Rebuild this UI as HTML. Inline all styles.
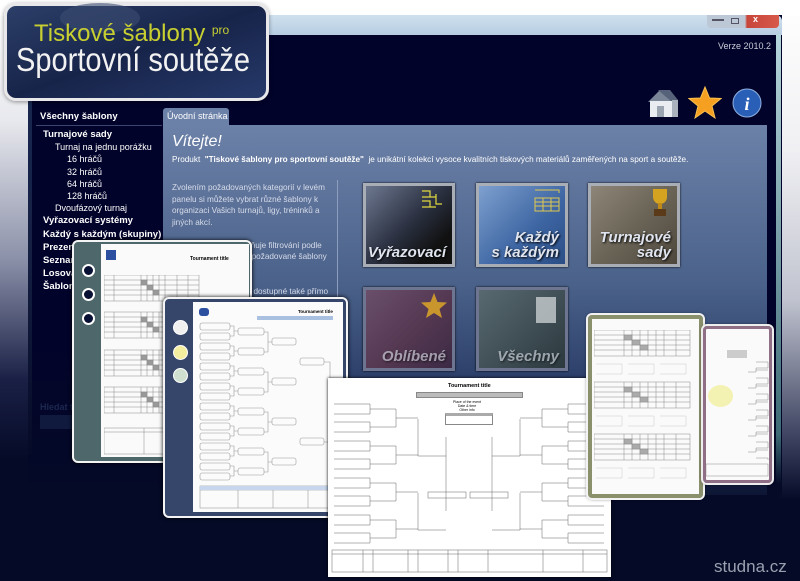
<!DOCTYPE html>
<html><head><meta charset="utf-8"><style>
*{margin:0;padding:0;box-sizing:border-box}
body{width:800px;height:581px;overflow:hidden;position:relative;background:#050a27;font-family:"Liberation Sans","DejaVu Sans",sans-serif}
.abs{position:absolute}
.lstrip{left:0;top:0;width:30px;height:581px;background:linear-gradient(#fff 0,#e8e9ee 120px,#8a90a8 260px,#1a2045 380px,#050a27 460px)}
.rstrip{left:780px;top:0;width:20px;height:581px;background:linear-gradient(#fff 0,#f0f0f3 150px,#c0c3cf 300px,#3a405e 440px,#050a27 500px)}
.tstrip{left:0;top:0;width:800px;height:16px;background:#fff}
.win{left:28px;top:15px;width:754px;height:480px;background:linear-gradient(#02032a 0,#02032a 330px,#050a27 480px)}
.title{left:28px;top:15px;width:754px;height:20px;background:linear-gradient(#cfe0ee,#b7cde2);border-radius:6px 6px 0 0}
.wedge{left:776px;top:34px;width:5px;height:450px;background:linear-gradient(#b5d6dc,#3e6b76 400px,#050a27)}
.ledge{left:28px;top:34px;width:4px;height:420px;background:linear-gradient(#1a2a55,#152043,#050a27)}
.panel{left:163px;top:125px;width:604px;height:370px;background:linear-gradient(#6c81a8 0,#4a6189 160px,#2a3d68 260px,#0d1635 370px)}
.tab{left:163px;top:108px;width:66px;height:17px;background:#6c81a8;border-radius:3px 3px 0 0;color:#fff;font-size:9px;padding:3px 0 0 4px}
.side{left:36px;color:#fff;font-size:9px;line-height:12.2px}
.side b{font-weight:bold;font-size:9.5px}
.tile{width:92px;height:84px;border:3px solid #a9adb6;box-shadow:0 0 2px #000}
.tile span{position:absolute;right:6px;bottom:4px;color:#dfe4ee;font:italic bold 15px "Liberation Sans",sans-serif;text-shadow:1px 1px 2px #000;text-align:right;line-height:15px}
</style></head><body>
<div class="abs lstrip"></div><div class="abs rstrip"></div><div class="abs tstrip"></div>
<div class="abs win"></div><div class="abs title"></div>
<div class="abs" style="left:707px;top:15px;width:72px;height:13px;border-radius:0 0 4px 4px;background:linear-gradient(90deg,#bcc8d6 0,#bcc8d6 38px,#c8453a 40px,#d65a4a)"></div>
<div class="abs" style="left:712px;top:19px;width:12px;height:2px;background:#556"></div>
<div class="abs" style="left:731px;top:18px;width:8px;height:6px;border:1px solid #556"></div>
<div class="abs" style="left:753px;top:14px;color:#fff;font-size:9px;font-weight:bold">x</div>
<div class="abs wedge"></div><div class="abs ledge"></div>
<div class="abs" style="left:718px;top:41px;color:#c9ccd6;font-size:9px">Verze 2010.2</div>

<svg class="abs" style="left:644px;top:86px" width="36" height="34"><polygon points="4,16 16,4 28,16" fill="#7a8697"/><polygon points="14,4 26,4 34,14 28,16" fill="#55627a"/><rect x="6" y="15" width="22" height="16" fill="#e9ecf0"/><rect x="28" y="14" width="6" height="17" fill="#aab2bd"/><rect x="13" y="20" width="7" height="11" fill="#9aa4b0"/></svg>
<svg class="abs" style="left:688px;top:86px" width="34" height="34"><polygon points="17,1 21.5,12 33,12.5 24,20 27,32 17,25 7,32 10,20 1,12.5 12.5,12" fill="#f5a020" stroke="#f8c050" stroke-width="1"/></svg>
<svg class="abs" style="left:732px;top:88px" width="30" height="30"><circle cx="15" cy="15" r="14" fill="#2a5fb8" stroke="#8fb0e0"/><text x="15" y="22" font-family="Liberation Serif" font-style="italic" font-weight="bold" font-size="18" fill="#fff" text-anchor="middle">i</text></svg>

<div class="abs" style="left:40px;top:111px;color:#fff;font-size:9.5px;font-weight:bold">Všechny šablony</div>
<div class="abs" style="left:36px;top:125px;width:126px;height:1px;background:#3a4670"></div>
<div class="abs side" style="top:128px">
<div style="padding-left:7px"><b>Turnajové sady</b></div>
<div style="padding-left:19px">Turnaj na jednu porážku</div>
<div style="padding-left:31px">16 hráčů</div>
<div style="padding-left:31px">32 hráčů</div>
<div style="padding-left:31px">64 hráčů</div>
<div style="padding-left:31px">128 hráčů</div>
<div style="padding-left:19px">Dvoufázový turnaj</div>
<div style="padding-left:7px"><b>Vyřazovací systémy</b></div>
<div style="padding-left:7px"><b>Každý s každým (skupiny)</b></div>
<div style="padding-left:7px"><b>Prezentace</b></div>
<div style="padding-left:7px"><b>Seznamy</b></div>
<div style="padding-left:7px"><b>Losování</b></div>
<div style="padding-left:7px"><b>Šablony</b></div>
</div>
<div class="abs" style="left:40px;top:402px;color:#1c2850;font-size:9px;font-weight:bold">Hledat text</div>
<div class="abs" style="left:40px;top:415px;width:120px;height:14px;background:#0f1a3e"></div>

<div class="abs tab">Úvodní stránka</div>
<div class="abs panel"></div>
<div class="abs" style="left:172px;top:133px;color:#fff;font:italic 16px 'Liberation Sans',sans-serif">Vítejte!</div>
<div class="abs" style="left:172px;top:155px;color:#fff;font-size:8.2px;white-space:nowrap">Produkt&nbsp; <b>"Tiskové šablony pro sportovní soutěže"</b>&nbsp; je unikátní kolekcí vysoce kvalitních tiskových materiálů zaměřených na sport a soutěže.</div>
<div class="abs" style="left:172px;top:182px;width:162px;color:#d7dcea;font-size:8.2px;line-height:11.5px">Zvolením požadovaných kategorií v levém panelu si můžete vybrat různé šablony k organizaci Vašich turnajů, ligy, tréninků a jiných akcí.<br><br>Seznam šablon umožňuje filtrování podle různých kritérií, takže požadované šablony najdete snadno.<br><br>Všechny šablony jsou dostupné také přímo na této úvodní stránce.</div>
<div class="abs" style="left:337px;top:180px;width:1px;height:200px;background:#8d9dbd"></div>

<div class="abs tile" style="left:363px;top:183px;background:linear-gradient(135deg,#6d7890,#2a3040 50%,#111 80%)"><span>Vyřazovací</span></div>
<div class="abs tile" style="left:476px;top:183px;background:linear-gradient(135deg,#7ea0cf,#3d65a2 60%,#2b4e86)"><span>Každý<br>s každým</span></div>
<div class="abs tile" style="left:588px;top:183px;background:linear-gradient(135deg,#8d8578,#6b6558 50%,#4e473c)"><span>Turnajové<br>sady</span></div>
<div class="abs tile" style="left:363px;top:287px;background:linear-gradient(135deg,#6a4f6b,#523650 60%,#3b2a44);border-color:#6e7590"><span style="opacity:.6">Oblíbené</span></div>
<div class="abs tile" style="left:476px;top:287px;background:linear-gradient(135deg,#586a70,#3d4c52 60%,#2c393f);border-color:#6e7590"><span style="opacity:.6">Všechny</span></div>
<svg class="abs" style="left:420px;top:292px" width="28" height="28"><polygon points="14,1 17.5,10 27,10.5 19.5,17 22,26 14,21 6,26 8.5,17 1,10.5 10.5,10" fill="#c9962e"/></svg>
<div class="abs" style="left:536px;top:297px;width:20px;height:26px;background:#c8cdd0;opacity:.8"></div>
<svg class="abs" style="left:420px;top:188px" width="30" height="30" stroke="#e0d840" fill="none" stroke-width="1.2"><path d="M2 3h8v6H2M2 9h8M10 3v6h6M2 13h8v6H2M10 13v6h6M16 6v10h6"/></svg>
<svg class="abs" style="left:533px;top:186px" width="30" height="30" stroke="#e0c850" fill="none"><rect x="2" y="12" width="24" height="13"/><path d="M2 16h24M2 20h24M10 12v13M18 12v13M2 4h24v3"/></svg>
<svg class="abs" style="left:646px;top:187px" width="28" height="32"><path d="M7 2h14v8a7 7 0 0 1-14 0z" fill="#d6a320"/><rect x="12" y="16" width="4" height="6" fill="#c08a18"/><rect x="8" y="22" width="12" height="7" fill="#5a3a18"/></svg>

<div class="abs" style="left:72px;top:240px;width:180px;height:223px;background:#4e676b;border:2px solid #f4f4f4;border-radius:6px;box-shadow:0 0 4px #000"></div>
<div class="abs" style="left:101px;top:244px;width:148px;height:213px;background:#fafafa"></div>
<div class="abs" style="left:82px;top:264px;width:13px;height:13px;border-radius:50%;background:#081033;border:2px solid #fff"></div>
<div class="abs" style="left:82px;top:288px;width:13px;height:13px;border-radius:50%;background:#081033;border:2px solid #fff"></div>
<div class="abs" style="left:82px;top:312px;width:13px;height:13px;border-radius:50%;background:#081033;border:2px solid #fff"></div>
<div class="abs" style="left:106px;top:250px;width:10px;height:10px;background:#2d4fa0"></div>
<svg class="abs" style="left:104px;top:275px" width="143" height="180" stroke="#888" stroke-width=".5" fill="none">
<g id="g1"><rect x="0" y="0" width="95" height="26"/><path d="M0 5h95M0 10h95M0 15h95M0 20h95M10 0v26M37 0v26M43 0v26M49 0v26M55 0v26M61 0v26M73 0v26M84 0v26"/><rect x="37" y="5" width="6" height="5" fill="#999"/><rect x="43" y="10" width="6" height="5" fill="#999"/><rect x="49" y="15" width="6" height="5" fill="#999"/></g>
<use href="#g1" y="37"/><use href="#g1" y="75"/><use href="#g1" y="112"/>
<rect x="0" y="153" width="140" height="26"/><path d="M0 157h140M40 153v26M90 153v26"/>
</svg>
<div class="abs" style="left:190px;top:256px;font-size:5px;font-weight:bold">Tournament title</div>

<div class="abs" style="left:163px;top:297px;width:185px;height:221px;background:#36466a;border:2px solid #f4f4f4;border-radius:6px;box-shadow:0 0 4px #000"></div>
<div class="abs" style="left:193px;top:302px;width:150px;height:210px;background:#fbfbfb"></div>
<div class="abs" style="left:173px;top:320px;width:15px;height:15px;border-radius:50%;background:#f0f0f0;border:1px solid #fff"></div>
<div class="abs" style="left:173px;top:345px;width:15px;height:15px;border-radius:50%;background:#f3eda0;border:1px solid #fff"></div>
<div class="abs" style="left:173px;top:368px;width:15px;height:15px;border-radius:50%;background:#cfe0d0;border:1px solid #fff"></div>
<div class="abs" style="left:199px;top:308px;width:10px;height:8px;background:#2d4fa0;border-radius:3px"></div>
<div class="abs" style="left:298px;top:309px;font-size:4.5px;font-weight:bold">Tournament title</div>
<div class="abs" style="left:257px;top:316px;width:76px;height:4px;background:#a9c0e0"></div>
<svg class="abs" style="left:198px;top:322px" width="145" height="190" stroke="#999" stroke-width=".6" fill="none">
<defs><pattern id="p2" width="145" height="20" patternUnits="userSpaceOnUse"><rect x="2" y="1" width="30" height="7" rx="2"/><rect x="2" y="11" width="30" height="7" rx="2"/><path d="M32 4h4v10h-4M36 9h4"/></pattern>
<pattern id="p2b" width="145" height="40" patternUnits="userSpaceOnUse"><rect x="40" y="6" width="26" height="7" rx="2"/><rect x="40" y="26" width="26" height="7" rx="2"/><path d="M66 10h4v20h-4M70 20h4"/></pattern></defs>
<rect width="145" height="160" fill="url(#p2)" stroke="none"/><rect width="145" height="160" fill="url(#p2b)" stroke="none"/>
<rect x="74" y="16" width="24" height="7" rx="2"/><rect x="74" y="96" width="24" height="7" rx="2"/><rect x="74" y="56" width="24" height="7" rx="2"/><rect x="74" y="136" width="24" height="7" rx="2"/>
<rect x="102" y="36" width="24" height="7" rx="2"/><rect x="102" y="116" width="24" height="7" rx="2"/>
<path d="M126 40h6v80h-6M132 80h6"/>
<rect x="2" y="164" width="140" height="22"/><path d="M2 168h140M40 164v22M75 164v22M110 164v22"/>
<rect x="2" y="164" width="138" height="4" fill="#c7d6ec" stroke="none"/>
</svg>

<div class="abs" style="left:328px;top:378px;width:283px;height:199px;background:#fff;box-shadow:0 0 3px #000"></div>
<div class="abs" style="left:448px;top:383px;font-size:5.5px;font-weight:bold">Tournament title</div>
<div class="abs" style="left:416px;top:392px;width:107px;height:6px;background:#bbb;border:1px solid #888"></div>
<div class="abs" style="left:453px;top:400px;font-size:3.5px;line-height:4px;text-align:center">Place of the event<br>Date &amp; time<br>Other info</div>
<div class="abs" style="left:445px;top:413px;width:48px;height:12px;border:1px solid #888;border-top:3px solid #aaa"></div>
<svg class="abs" style="left:328px;top:378px" width="283" height="199" stroke="#666" stroke-width=".5" fill="none">
<defs>
<pattern id="pl" width="283" height="37" patternUnits="userSpaceOnUse" y="22"><path d="M6 4h36v10H6M6 22h36v10H6M42 9h26v18H42M68 18h22"/></pattern>
<pattern id="pr" width="283" height="37" patternUnits="userSpaceOnUse" y="22"><path d="M276 4h-36v10h36M276 22h-36v10h36M240 9h-26v18h26M214 18h-22"/></pattern>
</defs>
<rect y="22" width="283" height="148" fill="url(#pl)" stroke="none"/>
<rect y="22" width="283" height="148" fill="url(#pr)" stroke="none"/>
<path d="M90 41v37h28M90 115v37h28M118 59v74"/>
<path d="M192 41v37h-28M192 115v37h-28M164 59v74"/>
<rect x="100" y="114" width="38" height="6"/><rect x="142" y="114" width="38" height="6"/>
<rect x="4" y="172" width="275" height="22"/><path d="M4 176h275M35 172v22M45 172v22M80 172v22M90 172v22M120 172v22M130 172v22M160 172v22M215 172v22M255 172v22"/>
</svg>

<div class="abs" style="left:588px;top:315px;width:115px;height:183px;background:#fafafa;border:4px solid #8a8f6c;outline:2px solid #f2f2f2;border-radius:4px;box-shadow:0 0 4px #000"></div>
<svg class="abs" style="left:594px;top:330px" width="104" height="160" stroke="#888" stroke-width=".5" fill="none">
<g id="g4"><rect x="0" y="0" width="96" height="26"/><path d="M0 5h96M0 10h96M0 15h96M0 20h96M30 0v26M38 0v26M46 0v26M54 0v26M62 0v26M70 0v26M82 0v26"/><rect x="30" y="5" width="8" height="5" fill="#aaa"/><rect x="38" y="10" width="8" height="5" fill="#aaa"/><rect x="46" y="15" width="8" height="5" fill="#aaa"/><path d="M2 34h26v10H2M34 34h26v10H34M66 34h26v10H66" stroke="#ccc"/></g>
<use href="#g4" y="52"/><use href="#g4" y="104"/>
</svg>

<div class="abs" style="left:703px;top:326px;width:69px;height:157px;background:#fafafa;border:3px solid #8f6f86;outline:2px solid #eee;border-radius:4px;box-shadow:0 0 4px #000"></div>
<div class="abs" style="left:727px;top:350px;width:20px;height:8px;background:#ccc"></div>
<div class="abs" style="left:708px;top:385px;width:25px;height:22px;border-radius:50%;background:#f3f0a0;opacity:.8"></div>
<svg class="abs" style="left:706px;top:360px" width="64" height="118" stroke="#888" stroke-width=".5" fill="none">
<defs><pattern id="p5" width="64" height="16" patternUnits="userSpaceOnUse"><path d="M50 2h12v6H50M50 10h12M50 8v4h-8"/></pattern></defs>
<rect width="64" height="100" fill="url(#p5)" stroke="none"/>
<rect x="0" y="104" width="62" height="12"/>
</svg>

<div class="abs" style="left:4px;top:3px;width:265px;height:98px;border-radius:12px;border:3px solid #e8e8ea;background:linear-gradient(160deg,#2c3f68,#17244a 50%,#26396a);box-shadow:0 1px 4px rgba(0,0,0,.4)"></div>
<div class="abs" style="left:60px;top:3px;width:80px;height:30px;border-radius:50%;background:#3c4d72;opacity:.6"></div>
<div class="abs" style="left:34px;top:20px;color:#c8cf30;font:24px 'Liberation Sans',sans-serif;white-space:nowrap">Tiskové šablony <span style="font-size:12px;vertical-align:7px">pro</span></div>
<div class="abs" style="left:16px;top:41px;color:#f2f2f2;font:33px 'Liberation Sans',sans-serif;transform:scaleX(.88);transform-origin:left;white-space:nowrap">Sportovní soutěže</div>

<div class="abs" style="left:714px;top:557px;color:#9aa0b0;font-size:17px">studna.cz</div>
</body></html>
